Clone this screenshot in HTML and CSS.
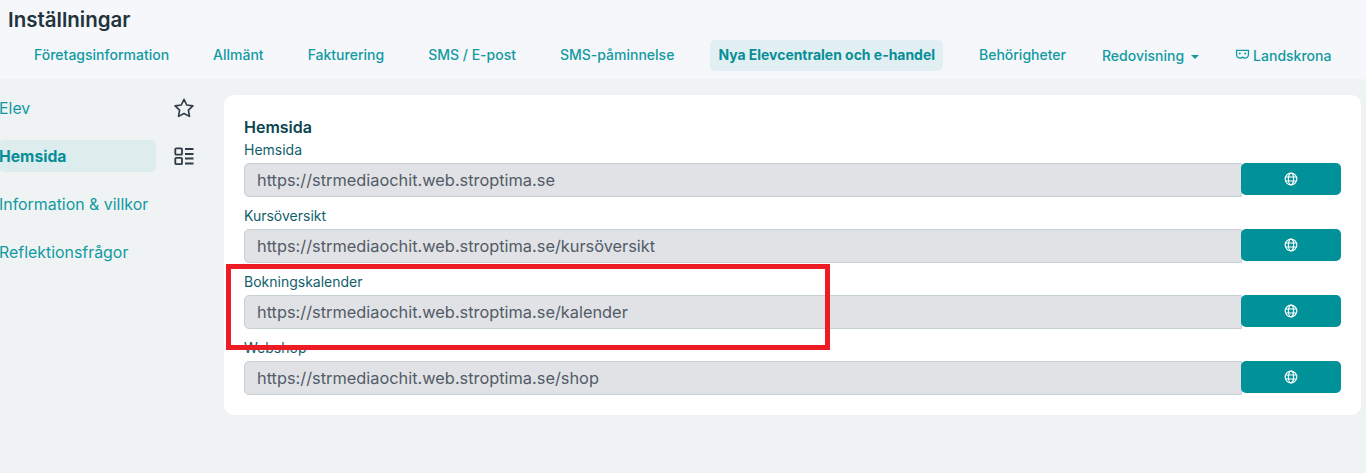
FILE: index.html
```html
<!DOCTYPE html>
<html lang="sv">
<head>
<meta charset="utf-8">
<title>Inställningar</title>
<link rel="stylesheet" href="styles.css">
</head>
<body>
<header class="top">
  <h1 class="title">Inställningar</h1>
  <nav class="tabs">
    <a class="tab">Företagsinformation</a>
    <a class="tab">Allmänt</a>
    <a class="tab">Fakturering</a>
    <a class="tab">SMS / E-post</a>
    <a class="tab">SMS-påminnelse</a>
    <a class="tab tab-active">Nya Elevcentralen och e-handel</a>
    <a class="tab tab-perm">Behörigheter</a>
    <a class="tab tab-drop">Redovisning<span class="caret"></span></a>
    <a class="tab tab-city">
      <svg class="mask" viewBox="0 0 16 12" width="15" height="11" fill="none" stroke="currentColor" stroke-width="1.400"><path d="M1.500 1.500h13v4.500c0 2.500-2 4-4 4-1.200 0-1.800-1-2.500-1s-1.300 1-2.500 1c-2 0-4-1.500-4-4z"/><circle cx="5" cy="5" r="1.100" fill="currentColor" stroke="none"/><circle cx="11" cy="5" r="1.100" fill="currentColor" stroke="none"/></svg>
      Landskrona
    </a>
  </nav>
</header>
<div class="main">
  <aside class="side">
    <div class="side-row">
      <a class="side-link">Elev</a>
      <svg class="side-icon" viewBox="0 0 20 20" width="20" height="20" fill="none" stroke="#2f3b45" stroke-width="1.600" stroke-linejoin="round"><path d="M10 1.300l2.700 5.700 6.200.9-4.500 4.300 1.100 6.200L10 15.500l-5.500 2.900 1.100-6.200-4.500-4.300 6.200-.9z"/></svg>
    </div>
    <div class="side-row">
      <a class="side-link side-active">Hemsida</a>
      <svg class="side-icon" viewBox="0 0 20 20" width="20" height="20" fill="none" stroke="#2f3b45" stroke-width="1.800"><rect x="1.300" y="2.300" width="6.700" height="6.400" rx="1"/><rect x="1.300" y="11.800" width="6.700" height="6.400" rx="1"/><path d="M11 3h8.500M11 8h8.500M11 12.500h8.500M11 17.500h8.500"/></svg>
    </div>
    <div class="side-row"><a class="side-link">Information &amp; villkor</a></div>
    <div class="side-row"><a class="side-link">Reflektionsfrågor</a></div>
  </aside>
  <section class="card">
    <h2 class="card-title">Hemsida</h2>
    <div class="field">
      <label class="label">Hemsida</label>
      <div class="group">
        <input class="input" readonly value="https://strmediaochit.web.stroptima.se">
        <button class="go"><svg viewBox="0 0 14 14" width="14" height="14" fill="none" stroke="#fff" stroke-width="1.200"><circle cx="7" cy="7" r="5.800"/><ellipse cx="7" cy="7" rx="2.600" ry="5.800"/><path d="M1.500 5h11M1.500 9h11"/></svg></button>
      </div>
    </div>
    <div class="field">
      <label class="label">Kursöversikt</label>
      <div class="group">
        <input class="input" readonly value="https://strmediaochit.web.stroptima.se/kursöversikt">
        <button class="go"><svg viewBox="0 0 14 14" width="14" height="14" fill="none" stroke="#fff" stroke-width="1.200"><circle cx="7" cy="7" r="5.800"/><ellipse cx="7" cy="7" rx="2.600" ry="5.800"/><path d="M1.500 5h11M1.500 9h11"/></svg></button>
      </div>
    </div>
    <div class="field">
      <label class="label">Bokningskalender</label>
      <div class="group">
        <input class="input" readonly value="https://strmediaochit.web.stroptima.se/kalender">
        <button class="go"><svg viewBox="0 0 14 14" width="14" height="14" fill="none" stroke="#fff" stroke-width="1.200"><circle cx="7" cy="7" r="5.800"/><ellipse cx="7" cy="7" rx="2.600" ry="5.800"/><path d="M1.500 5h11M1.500 9h11"/></svg></button>
      </div>
    </div>
    <div class="field">
      <label class="label">Webshop</label>
      <div class="group">
        <input class="input" readonly value="https://strmediaochit.web.stroptima.se/shop">
        <button class="go"><svg viewBox="0 0 14 14" width="14" height="14" fill="none" stroke="#fff" stroke-width="1.200"><circle cx="7" cy="7" r="5.800"/><ellipse cx="7" cy="7" rx="2.600" ry="5.800"/><path d="M1.500 5h11M1.500 9h11"/></svg></button>
      </div>
    </div>
  </section>
</div>
<div class="highlight"></div>
</body>
</html>
```
FILE: styles.css
```css
* { box-sizing: border-box; }
html, body { margin: 0; height: 100%; }
body {
  background: #eff3f4;
  font-family: Inter, "Liberation Sans", sans-serif;
  font-size: 14px;
  color: #00929a;
  position: relative;
  overflow: hidden;
}
.top {
  height: 79px;
  background: #f5f7fb;
  padding: 8px 0 0 8px;
}
.title {
  margin: 0;
  font-size: 20.500px;
  line-height: 24px;
  font-weight: 600;
  color: #22333b;
}
.tabs {
  display: flex;
  align-items: center;
  margin-top: 8px;
  padding-left: 18px;
}
.tab {
  height: 31px;
  line-height: 30px;
  padding: 0 8px;
  margin-right: 28px;
  font-size: 14px;
  font-weight: 500;
  color: #119aa1;
  white-space: nowrap;
  border-radius: 5px;
  flex: none;
}
.tab-active {
  background: #e2eff2;
  color: #078e96;
  font-size: 13.950px;
  font-weight: 700;
}
.tab-perm { margin-right: 20px; }
.tab-drop { margin-right: 28px; padding-top: 1px; }
.tab-city { margin-right: 0; padding-left: 0; display: flex; align-items: center; gap: 3px; }
.mask { margin-top: -2px; }
.caret {
  display: inline-block;
  margin-left: 7px;
  vertical-align: 2px;
  border-top: 4px solid currentColor;
  border-left: 4px solid transparent;
  border-right: 4px solid transparent;
}
.main {
  display: flex;
  align-items: flex-start;
  padding: 16px 5px 0 0;
}
.side {
  width: 224px;
  flex: none;
  display: flex;
  flex-direction: column;
  gap: 16px;
  margin-top: -3px;
}
.side-row {
  height: 32px;
  display: flex;
  align-items: center;
}
.side-link {
  width: 157px;
  height: 32px;
  line-height: 33px;
  font-size: 15.900px;
  margin-left: -1px;
  color: #119aa1;
  border-radius: 5px;
  white-space: nowrap;
}
.side-active {
  background: #ddedee;
  color: #078e96;
  font-size: 15.700px;
  font-weight: 700;
}
.side-icon { margin-left: 18px; flex: none; }
.card {
  flex: 1;
  height: 320px;
  background: #fff;
  border-radius: 10px;
  padding: 22px 20px 0;
}
.card-title {
  margin: 0 0 3px;
  font-size: 16px;
  line-height: 20px;
  font-weight: 600;
  color: #0b4450;
}
.field { height: 66px; }
.label {
  display: block;
  height: 23px;
  padding-top: 1px;
  line-height: 18px;
  font-size: 14px;
  color: #115e6b;
}
.group { display: flex; align-items: flex-start; }
.input {
  flex: 1;
  min-width: 0;
  height: 34px;
  padding: 0 12px;
  background: #e0e2e6;
  border: 1px solid #c4d0d3;
  border-radius: 5px 0 0 5px;
  font-family: inherit;
  font-size: 16.350px;
  font-weight: 400;
  color: #525b67;
  outline: none;
}
.go {
  flex: none;
  width: 100px;
  height: 32px;
  margin-left: -1px;
  padding: 0;
  background: #009298;
  border: none;
  border-radius: 5px;
  display: flex;
  align-items: center;
  justify-content: center;
}
.highlight {
  position: absolute;
  left: 226px;
  top: 264px;
  width: 604px;
  height: 86px;
  border: 5px solid #ed1c24;
  pointer-events: none;
}
```
